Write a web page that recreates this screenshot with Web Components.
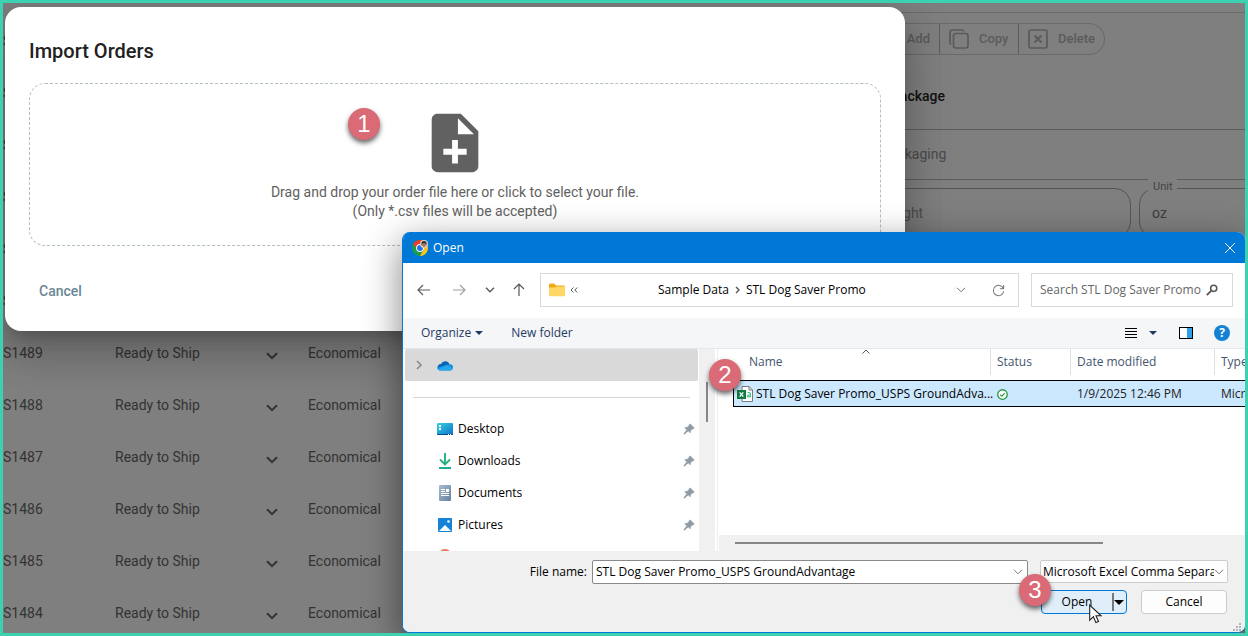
<!DOCTYPE html>
<html lang="en">
<head>
<meta charset="utf-8">
<title>Import Orders</title>
<style>
  body { margin: 0; }
</style>
</head>
<body>
<app-frame>
  <order-table slot="orders"></order-table>
  <package-panel slot="details"></package-panel>
  <import-dialog slot="overlay"></import-dialog>
  <file-dialog slot="overlay"></file-dialog>
  <step-badge slot="overlay" style="left:345px;top:105px">1</step-badge>
  <step-badge slot="overlay" style="left:706px;top:356px">2</step-badge>
  <step-badge slot="overlay" style="left:1016px;top:571px">3</step-badge>
  <mouse-pointer slot="overlay"></mouse-pointer>
</app-frame>

<script>
const define = (name, html, ready) => customElements.define(name, class extends HTMLElement {
  constructor() {
    super();
    this.attachShadow({ mode: 'open' }).innerHTML = '<style>*{box-sizing:border-box}</style>' + html;
    if (ready) ready.call(this);
  }
});

/* Icon set: [viewBox width, viewBox height, markup] */
const ICONS = {
  noteAdd: [24, 24, '<path fill="#616161" d="M14 2H6c-1.1 0-1.99.9-1.99 2L4 20c0 1.1.89 2 1.99 2H18c1.1 0 2-.9 2-2V8l-6-6zm2 14h-3v3h-2v-3H8v-2h3v-3h2v3h3v2zm-3-7V3.5L18.5 9H13z"/>'],
  chevron: [12, 8, '<path fill="none" stroke="#333" stroke-width="2" d="M1 1.2l5 5 5-5"/>'],
  copy: [20, 20, '<g fill="none" stroke="#5b5b5b" stroke-width="1.7"><rect x="4.500" y="4.500" width="14.500" height="14.500" rx="2.400"/><path d="M2.200 15.500C1.300 15.200 1 14.500 1 13.500V3.500A2.600 2.600 0 0 1 3.600 1h9c1.200 0 1.900.4 2.200 1.500"/></g>'],
  delete: [20, 20, '<rect x="1" y="1" width="18" height="18" rx="2" fill="none" stroke="#5b5b5b" stroke-width="1.7"/><path d="M6.500 6.500l7 7m0-7l-7 7" stroke="#5b5b5b" stroke-width="2"/>'],
  close: [12, 12, '<path d="M1 1l10 10M11 1L1 11" stroke="#fff" fill="none"/>'],
  back: [14, 12, '<path d="M13 6H1M6 1L1 6l5 5" stroke="#5c5c5c" fill="none" stroke-width="1.2"/>'],
  forward: [14, 12, '<path d="M1 6h12M8 1l5 5-5 5" stroke="#a0a0a0" fill="none" stroke-width="1.2"/>'],
  recent: [10, 6, '<path d="M1 .8l4 4 4-4" stroke="#555" fill="none" stroke-width="1.300"/>'],
  thin: [10, 6, '<path d="M1 .8l4 4 4-4" stroke="#777" fill="none"/>'],
  up: [12, 14, '<path d="M6 13V1M1 6l5-5 5 5" stroke="#555" fill="none" stroke-width="1.2"/>'],
  folder: [16, 14, '<path d="M0 2a1.500 1.500 0 0 1 1.500-1.500H5l2 2h7.500A1.500 1.500 0 0 1 16 4v4H0z" fill="#f0a90c"/><path d="M0 4.500h6l2-1h8V12a1.300 1.300 0 0 1-1.300 1.300H1.300A1.300 1.300 0 0 1 0 12z" fill="#ffd766"/>'],
  dbl: [8, 6, '<path d="M3.500.5L1 3l2.500 2.500M7.300.5L4.800 3l2.500 2.500" stroke="#555" fill="none"/>'],
  crumb: [5, 8, '<path d="M1 1l3 3-3 3" stroke="#555" fill="none" stroke-width="1.400"/>'],
  refresh: [14, 14, '<path d="M12.300 5A5.600 5.600 0 1 0 12.600 7.800M12.500 1v4H8.500" stroke="#777" fill="none" stroke-width="1.100"/>'],
  search: [12, 12, '<circle cx="7.700" cy="4.300" r="3.100" fill="none" stroke="#555" stroke-width="1.500"/><path d="M5.400 6.600L.8 11.200" stroke="#555" stroke-width="1.800"/>'],
  caret: [8, 4, '<path d="M0 0h8L4 4z" fill="#1f3a63"/>'],
  caretBlack: [10, 5, '<path d="M0 0h10L5 5z" fill="#000"/>'],
  list: [12, 10, '<path d="M0 .5h12M0 3.500h12M0 6.500h12M0 9.500h12" stroke="#000"/>'],
  pane: [14, 12, '<rect x=".5" y=".5" width="13" height="11" fill="#fff" stroke="#000"/><path d="M8 1h5v10H8z" fill="#2da0e8"/>'],
  cloud: [16, 11, '<path d="M4 4a4.600 4.600 0 0 1 8.500.3L9 7 3 9 .6 8A3.300 3.300 0 0 1 4 4z" fill="#0a64b8"/><path d="M12.500 4.300A3.200 3.200 0 0 1 16 7.400c0 1.900-1.400 3.100-3.100 3.100H3.500C1.500 10.500.2 9 .1 7.500L8 5.500z" fill="#1490df"/><path d="M1 9.400L9.800 5l6 3.500c-.4 1.200-1.500 2-2.900 2H3.500A3.300 3.300 0 0 1 1 9.400z" fill="#28a8ea"/>'],
  expand: [6, 10, '<path d="M1 1l4 4-4 4" stroke="#888" fill="none" stroke-width="1.600"/>'],
  desktop: [16, 12, '<defs><linearGradient id="g" x2="1" y2="1"><stop stop-color="#35d3e4"/><stop offset="1" stop-color="#0f6fc6"/></linearGradient></defs><rect width="16" height="12" rx="1" fill="url(#g)"/><path d="M0 11h16v0a1 1 0 0 1-1 1H1a1 1 0 0 1-1-1z" fill="#0b4a86"/><path d="M2 2h2v2H2zM2 5h2v2H2z" fill="#fff"/><path d="M11 11h1v1h-1zM13 11h1v1h-1z" fill="#fff"/>'],
  downloads: [12, 16, '<path d="M6 0v11M1 6.500l5 5 5-5" stroke="#23b184" fill="none" stroke-width="1.900"/><path d="M0 15h12" stroke="#1fae92" stroke-width="2"/>'],
  documents: [12, 16, '<defs><linearGradient id="g" x2="1" y2="1"><stop stop-color="#a9bdd2"/><stop offset="1" stop-color="#64809f"/></linearGradient></defs><rect width="12" height="16" rx="1" fill="url(#g)"/><path d="M2 4.500h4M2 6.500h4M2 8.500h8M2 10.500h8" stroke="#fff"/><path d="M7 4h3v3H7z" fill="#fff"/>'],
  pictures: [14, 14, '<rect width="14" height="14" rx="1" fill="#1583d8"/><path d="M1 13l6-6 6 6z" fill="#fff"/><circle cx="10.500" cy="3.500" r="1.300" fill="#fff"/>'],
  music: [14, 14, '<circle cx="7" cy="6" r="7" fill="#e9795a"/>'],
  pin: [12, 12, '<path d="M7 .8L11.400 5 9.900 6.100 8.500 6.400 7.500 8.200 7.200 9.900 5.200 8 1.400 11.200.8 10.600 3.800 6.700 1.600 4.700 3.800 4.200 5.500 3.400 6 2z" fill="#8f9ba4" stroke="#8f9ba4" stroke-width=".5"/>'],
  sort: [8, 5, '<path d="M.5 4.500L4 1l3.500 3.500" stroke="#555" fill="none"/>'],
  csv: [16, 16, '<path d="M5 .5h7l3.500 3.500v11.500H5z" fill="#fff" stroke="#7b7b7b"/><path d="M12 .5V4h3.500" fill="none" stroke="#7b7b7b"/><rect y="4" width="9" height="9" fill="#107c41"/><path d="M2.700 6.300l3.600 4.400M6.300 6.300l-3.600 4.400" stroke="#fff" stroke-width="1.300"/><path d="M10.500 6.800c1.500-.5 2.900-.2 2.900 1v3.200M13.400 8.700c-1.800 0-2.900.3-2.900 1.300 0 1.300 2.300 1.200 2.900 0" fill="none" stroke="#33c481" stroke-width="1.100"/>'],
  synced: [12, 12, '<circle cx="6" cy="6" r="5.200" fill="#fff" stroke="#26943c" stroke-width="1.400"/><path d="M3.500 6.200l1.800 1.700 3.200-3.400" fill="none" stroke="#26943c" stroke-width="1.200"/>'],
  chrome: [16, 16, '<circle cx="8" cy="8" r="8" fill="#1e9b4b"/><path d="M1.100 4A8 8 0 0 1 14.900 4L8 8H4.500z" fill="#ea3d2f"/><path d="M14.900 4A8 8 0 0 1 8 16l3.500-6L10 4z" fill="#fcc31e"/><circle cx="8" cy="8" r="3.900" fill="#fff"/><circle cx="8" cy="8" r="2.900" fill="#1a73e8"/><circle cx="12" cy="4" r="4" fill="#d8d0c8"/><path d="M9.500 2.600a2.700 2.700 0 0 1 5 0v2.600h-1V3.500h-3v1.700h-1z" fill="#2c2623"/><path d="M10.500 3.700h3v2.200l-1.500 1.300-1.500-1.300z" fill="#a9705a"/>'],
  grip: [8, 8, '<path fill="#b5b5b5" d="M6 0h2v2H6zM3 3h2v2H3zM6 3h2v2H6zM0 6h2v2H0zM3 6h2v2H3zM6 6h2v2H6z"/>'],
  pointer: [13, 20, '<path d="M.7 1v15.200l3.700-3.500 2.500 5.900 2.600-1.100-2.500-5.700h5z" fill="#fff" stroke="#222" stroke-width="1.100"/>']
};
customElements.define('ui-icon', class extends HTMLElement {
  constructor() { super(); this.attachShadow({ mode: 'open' }); }
  connectedCallback() {
    const [w, h, body] = ICONS[this.getAttribute('name')];
    const s = Number(this.getAttribute('scale-to')) || w;
    this.shadowRoot.innerHTML = `<style>:host{display:inline-flex;flex:none}svg{display:block;overflow:visible}</style>
      <svg width="${s}" height="${s * h / w}" viewBox="0 0 ${w} ${h}" aria-hidden="true">${body}</svg>`;
  }
});

define('step-badge', `<style>
  :host{position:absolute;z-index:3;display:flex;align-items:center;justify-content:center;width:32px;height:32px;
    border-radius:50%;background:#d96a76;color:#fff;font:24px/32px "Liberation Sans",sans-serif;
    box-shadow:0 3px 5px rgba(0,0,0,.6)}
</style><slot></slot>`);

define('mouse-pointer', `<style>:host{position:absolute;z-index:4;left:1086px;top:601px}</style><ui-icon name="pointer"></ui-icon>`);

define('app-frame', `<style>
  :host{display:grid;grid-template-columns:863px 1fr;height:100vh;box-sizing:border-box;position:relative;overflow:hidden;
    border:3px solid #3bd1b1;background:#7f7f7f;font:14px/20px Roboto,sans-serif;color:#333}
</style><slot name="orders"></slot><slot name="details"></slot><slot name="overlay"></slot>`);

define('order-table', `<style>
  :host{display:block;padding-top:12px}
  table{border-collapse:collapse;table-layout:fixed;width:100%}
  td{height:52px;padding:0;vertical-align:middle}
  td:nth-child(1){width:112px}
  td:nth-child(2){width:151px}
  td:nth-child(3){width:42px}
  ui-icon{vertical-align:middle;padding-top:4px}
</style><table><tbody></tbody></table>`, function () {
  const covered = '<tr><td>S</td><td></td><td></td><td></td></tr>';
  const row = id => `<tr><td>S${id}</td><td>Ready to Ship</td><td><ui-icon name="chevron"></ui-icon></td><td>Economical</td></tr>`;
  this.shadowRoot.querySelector('tbody').innerHTML =
    covered.repeat(6) + [1489, 1488, 1487, 1486, 1485, 1484].map(row).join('');
});

define('package-panel', `<style>
  :host{display:flex;flex-direction:column;min-width:0;padding-top:9px}
  .top{border-top:1px solid #6a6a6a;padding:10px 0 0}
  .group{display:flex;width:239px;height:32px;border:1px solid #6a6a6a;border-radius:0 16px 16px 0;border-left:0}
  button{display:flex;align-items:center;gap:10px;margin:0;padding:0 9px;border:0;border-right:1px solid #5c5c5c;
    background:none;font:500 13px/20px Roboto,sans-serif;color:#5b5b5b}
  button:first-child{width:74px;justify-content:flex-end}
  button:nth-child(2){width:79px}
  button:last-child{border:0}
  h2{margin:31px 0 23px 25px;font:500 14px/20px Roboto,sans-serif;color:#111}
  .row{border:solid #5c5c5c;border-width:1px 0;height:51px;padding:14px 15px;color:#4a4a4a}
  .fields{display:grid;grid-template-columns:265px 1fr;gap:8px;margin-top:8px}
  .field{position:relative;height:50px;border:1px solid #555;border-radius:16px;padding:14px 12px 14px 13px;color:#4a4a4a}
  .field:last-child{margin-right:-40px;padding-left:12px;color:#3c3c3c}
  .field input{width:90px;padding:0;border:0;background:none;outline:0;font:inherit;color:inherit}
  .field input::placeholder{color:#4f4f4f;opacity:1}
  label{position:absolute;left:8px;top:-12px;padding:0 5px;background:#7f7f7f;font-size:11px;color:#444}
</style>
<div class="top"><div class="group">
  <button>Add</button><button><ui-icon name="copy"></ui-icon>Copy</button><button><ui-icon name="delete"></ui-icon>Delete</button>
</div></div>
<h2>Package</h2>
<div class="row">Packaging</div>
<div class="fields">
  <div class="field"><input aria-label="Weight" placeholder="Weight"></div>
  <div class="field"><label for="unit">Unit</label><input id="unit" value="oz"></div>
</div>`);

define('import-dialog', `<style>
  :host{position:absolute;z-index:1;left:2px;top:4px;width:900px;box-sizing:border-box;padding:34px 24px 22px;
    border-radius:16px;background:#fff;color:#616161;
    box-shadow:0 11px 15px -7px rgba(0,0,0,.2),0 24px 38px 3px rgba(0,0,0,.14),0 9px 46px 8px rgba(0,0,0,.12)}
  h1{margin:0 0 22px;font:500 20px/20px Roboto,sans-serif;color:#212121}
  .drop{display:flex;flex-direction:column;align-items:center;height:163px;padding-top:24px;
    border:1px dashed #b0bec5;border-radius:16px;text-align:center;line-height:19px}
  p{margin:5px 0 0}
  button{display:block;margin:27px 0 0;padding:8px 10px;border:0;background:none;font:500 14px/20px Roboto,sans-serif;color:#6b8794}
</style>
<h1>Import Orders</h1>
<div class="drop"><ui-icon name="noteAdd" scale-to="70"></ui-icon>
<p>Drag and drop your order file here or click to select your file.<br>(Only *.csv files will be accepted)</p></div>
<button>Cancel</button>`);

define('quick-link', `<style>
  :host{display:flex;align-items:center;height:32px;padding:0 4px 0 34px}
  a{display:flex;align-items:center;flex:1;gap:5px;color:#000;text-decoration:none}
  .i{display:flex;width:16px;justify-content:center}
</style><a href="#"><span class="i"><slot name="icon"></slot></span><slot></slot></a><slot name="pin"></slot>`);

define('file-dialog', `<style>
  :host{position:absolute;z-index:2;left:399px;top:229px;right:0;box-sizing:border-box;overflow:hidden;
    border:solid #0078d7;border-width:0 0 1px 1px;border-radius:8px;background:#fff;
    font:12px/16px "Open Sans",sans-serif;color:#000;box-shadow:0 12px 36px 2px rgba(0,0,0,.45)}
  button,input,select{margin:0;padding:0;border:0;background:none;font:inherit;color:inherit;outline:0}
  button{display:flex;align-items:center;justify-content:center}
  header{display:flex;align-items:center;gap:5px;height:31px;padding:0 9px 0 9px;background:#0078d7;color:#fff}
  header button{margin-left:auto}
  .nav{display:flex;align-items:center;height:55px;padding:0 12px 1px 14px}
  .nav>button{height:24px}
  .nav>button:nth-child(1){width:14px}
  .nav>button:nth-child(2){width:14px;margin-left:21px}
  .nav>button:nth-child(3){width:10px;margin-left:19px}
  .nav>button:nth-child(4){width:12px;margin-left:18px}
  .address{display:flex;align-items:center;flex:1;height:34px;margin:0 12px 0 15px;padding:0 13px 0 8px;border:1px solid #d9d9d9}
  .address .dbl{padding:0 80px 0 5px}
  .address .crumb{padding:0 6px}
  .address .drop{margin-left:auto;padding-right:26px}
  .search{display:flex;align-items:center;width:202px;height:34px;padding:0 14px 0 8px;border:1px solid #d9d9d9}
  .search input{flex:1;min-width:0}
  .search input::placeholder{color:#666;opacity:1}
  .bar{display:flex;align-items:center;height:31px;padding:0 15px 0 18px;background:#f5f6f7;border-bottom:1px solid #e5e7ea;color:#1f3a63}
  .bar button{gap:4px;margin-right:28px}
  .bar .first{margin-left:auto;margin-right:22px;gap:12px}
  .bar .mid{margin-right:21px}
  .bar .help{width:16px;height:16px;margin:0;border-radius:50%;background:#1382d4;color:#fff;font-weight:700}
  .body{display:grid;grid-template-columns:296px 16px 1fr;height:202px}
  .links{overflow:hidden;white-space:nowrap}
  .drive{display:flex;align-items:center;gap:15px;height:32px;margin:0 1px 0 2px;padding-left:11px;border-radius:2px;background:#d9d9d9}
  hr{height:1px;margin:16px 9px 15px 10px;border:0;background:#d5d5d5}
  .vbar{background:#f0f0f0;padding:33px 0 0 7px}
  .vbar i{display:block;width:2px;height:40px;background:#868686}
  .files{display:flex;flex-direction:column;min-width:0;overflow:hidden;border-left:1px solid #fff;margin-left:3px;box-shadow:-1px 0 #ececec}
  table{border-collapse:separate;border-spacing:0;table-layout:fixed;width:560px;margin-left:14px}
  th{position:relative;height:26px;padding:0 0 0 6px;text-align:left;font-weight:400;color:#44546f;border-right:1px solid #e0e0e0}
  th:first-child{padding-left:16px}
  th ui-icon{position:absolute;left:129px;top:0}
  .gap td{height:5px;padding:0;border:0}
  td{height:27px;padding:0 0 0 6px;white-space:nowrap;background:#cce8ff;border:solid #000;border-width:1px 0;color:#222}
  td:first-child{padding-left:3px;border-left-width:1px;color:#000}
  .gap td{background:none}
  td span{display:flex;align-items:center;gap:3px}
  .hbar{margin-top:auto;height:16px;padding:7px 142px 0 16px;background:#f0f0f0}
  .hbar i{display:block;height:2px;background:#868686}
  footer{position:relative;display:grid;grid-template-columns:184px 1fr 188px;grid-auto-rows:24px;gap:6px 0;padding:9px 17px 18px 0;background:#f0f0f0}
  footer>label{align-self:center;text-align:right}
  .combo{display:flex;align-items:center;margin:0 12px 0 5px;padding:0 4px 0 3px;border:1px solid #8a8a8a;border-radius:2px;background:#fff}
  .combo input{flex:1;min-width:0}
  .type{display:flex;align-items:center;height:23px;padding:0 3px 0 2px;border:1px solid #ccc;border-radius:2px;background:#fdfdfd}
  .type select{flex:1;min-width:0;appearance:none;white-space:nowrap}
  .actions{grid-column:3;display:grid;grid-template-columns:86px 86px;gap:14px;margin-left:1px}
  .actions>*{border:1px solid #ccc;border-radius:4px;background:#fdfdfd}
  .split{display:flex;border-color:#0078d7;background:#e0eef9}
  .split button:first-child{width:70px}
  .split button:last-child{width:12px;height:18px;align-self:center;border-left:2px solid #777}
  .grip{position:absolute;right:4px;bottom:1px}
</style>
<header><ui-icon name="chrome"></ui-icon><span>Open</span><button aria-label="Close"><ui-icon name="close"></ui-icon></button></header>
<div class="nav">
  <button aria-label="Back"><ui-icon name="back"></ui-icon></button>
  <button aria-label="Forward"><ui-icon name="forward"></ui-icon></button>
  <button aria-label="Recent"><ui-icon name="recent"></ui-icon></button>
  <button aria-label="Up"><ui-icon name="up"></ui-icon></button>
  <div class="address"><ui-icon name="folder"></ui-icon><ui-icon class="dbl" name="dbl"></ui-icon><span>Sample Data</span><ui-icon class="crumb" name="crumb"></ui-icon><span>STL Dog Saver Promo</span>
    <button class="drop" aria-label="Previous locations"><ui-icon name="thin"></ui-icon></button><button aria-label="Refresh"><ui-icon name="refresh" scale-to="13"></ui-icon></button></div>
  <div class="search"><input aria-label="Search" placeholder="Search STL Dog Saver Promo"><ui-icon name="search"></ui-icon></div>
</div>
<div class="bar"><button>Organize <ui-icon name="caret"></ui-icon></button><button>New folder</button>
  <button class="first" aria-label="View"><ui-icon name="list"></ui-icon><ui-icon name="caret"></ui-icon></button>
  <button class="mid" aria-label="Preview pane"><ui-icon name="pane"></ui-icon></button><button class="help">?</button></div>
<div class="body">
  <nav class="links">
    <div class="drive"><ui-icon name="expand"></ui-icon><ui-icon name="cloud"></ui-icon></div>
    <hr>
    <quick-link><ui-icon slot="icon" name="desktop"></ui-icon>Desktop<ui-icon slot="pin" name="pin"></ui-icon></quick-link>
    <quick-link><ui-icon slot="icon" name="downloads"></ui-icon>Downloads<ui-icon slot="pin" name="pin"></ui-icon></quick-link>
    <quick-link><ui-icon slot="icon" name="documents"></ui-icon>Documents<ui-icon slot="pin" name="pin"></ui-icon></quick-link>
    <quick-link><ui-icon slot="icon" name="pictures"></ui-icon>Pictures<ui-icon slot="pin" name="pin"></ui-icon></quick-link>
    <quick-link><ui-icon slot="icon" name="music"></ui-icon></quick-link>
  </nav>
  <div class="vbar"><i></i></div>
  <div class="files">
    <table>
      <colgroup><col style="width:258px"><col style="width:80px"><col style="width:144px"><col></colgroup>
      <thead><tr><th>Name<ui-icon name="sort"></ui-icon></th><th>Status</th><th>Date modified</th><th>Type</th></tr></thead>
      <tbody><tr class="gap"><td colspan="4"></td></tr>
      <tr><td><span><ui-icon name="csv"></ui-icon>STL Dog Saver Promo_USPS GroundAdva...</span></td><td><ui-icon name="synced" scale-to="11" style="vertical-align:middle"></ui-icon></td><td>1/9/2025 12:46 PM</td><td>Micr</td></tr></tbody>
    </table>
    <div class="hbar"><i></i></div>
  </div>
</div>
<footer>
  <label for="fname">File name:</label>
  <div class="combo"><input id="fname" value="STL Dog Saver Promo_USPS GroundAdvantage"><ui-icon name="thin"></ui-icon></div>
  <div class="type"><select aria-label="File type"><option>Microsoft Excel Comma Separa</option></select><ui-icon name="thin"></ui-icon></div>
  <div class="actions"><div class="split"><button>Open</button><button aria-label="Open options"><ui-icon name="caretBlack"></ui-icon></button></div><button>Cancel</button></div>
  <ui-icon class="grip" name="grip"></ui-icon>
</footer>`);
</script>
</body>
</html>
